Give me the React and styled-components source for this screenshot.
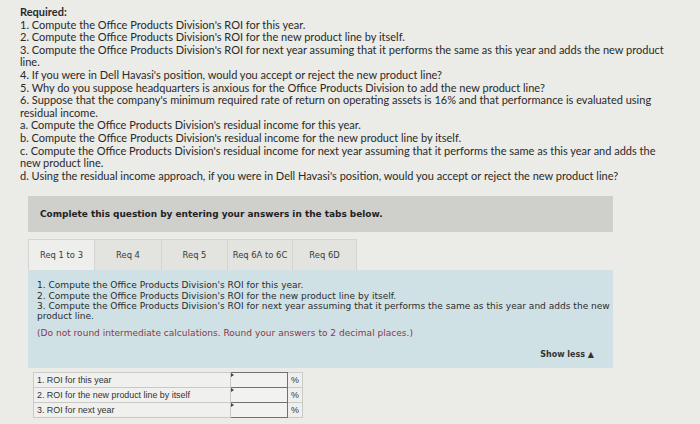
import React from "react";
import styled, { createGlobalStyle } from "styled-components";

const Global = createGlobalStyle`
  html, body { margin: 0; padding: 0; background: #ebebe7; }
  body { width: 700px; height: 424px; overflow: hidden; }
`;

const Page = styled.div`
  padding: 6px 0 0 20px;
  width: 680px;
`;

const Required = styled.div`
  font-family: "Lato", "Liberation Sans", sans-serif;
  font-size: 11px;
  line-height: 12.6px;
  color: #2a2a2a;
  width: 656px;
  p { margin: 0; }
  strong { font-weight: 700; }
`;

const Work = styled.div`
  margin: 14px 0 0 8px;
  width: 585px;
`;

const Banner = styled.div`
  background: #cfcfcc;
  height: 36px;
  display: flex;
  align-items: center;
  padding-left: 12px;
  font-family: "DejaVu Sans", Verdana, sans-serif;
  font-weight: 700;
  font-size: 8.95px;
  color: #222;
`;

const Tabs = styled.div`
  display: flex;
  margin-top: 7px;
  height: 31px;
`;

const Tab = styled.div`
  width: ${(p) => p.$w}px;
  box-sizing: border-box;
  display: flex;
  align-items: center;
  justify-content: center;
  font-family: "DejaVu Sans", Verdana, sans-serif;
  font-size: 8.4px;
  color: #3a3a3a;
  background: ${(p) => (p.$active ? "#eeeeec" : "#e3e3e0")};
  border: 1px solid #d4d4d0;
  border-bottom: none;
  border-left-width: ${(p) => (p.$first ? 1 : 0)}px;
`;

const Panel = styled.div`
  background: #d0e1e6;
  padding: 10px 1px 7px 9px;
  font-family: "DejaVu Sans", Verdana, sans-serif;
  font-size: 9.05px;
  line-height: 10.2px;
  color: #2b2b2b;
  p { margin: 0; }
`;

const Note = styled.p`
  && { margin-top: 7px; }
  color: #8a3848;
`;

const ShowLess = styled.div`
  text-align: right;
  margin-top: 12px;
  padding-right: 18px;
  font-weight: 700;
  font-size: 8px;
  color: #333;
`;

const Table = styled.table`
  margin: 4px 0 0 5px;
  border-collapse: collapse;
  font-family: "Liberation Sans", Arial, sans-serif;
  font-size: 8.9px;
  color: #333;
  td { border: 1px solid #c9c9c6; height: 14px; padding: 0; }
`;

const Label = styled.td`
  width: 193px;
  && { padding-left: 3px; }
  background: #f0f0ee;
`;

const InputCell = styled.td`
  width: 56px;
  position: relative;
  && { border: 1.5px solid #6d7272; }
  background: #f2f2f0;
  &::before {
    content: "";
    position: absolute;
    left: 0;
    top: 0;
    border-left: 3px solid #444;
    border-top: 2px solid transparent;
    border-bottom: 2px solid transparent;
  }
`;

const Pct = styled.td`
  width: 14px;
  text-align: center;
  background: #efefed;
`;

const tabs = [
  { t: "Req 1 to 3", w: 67, active: true },
  { t: "Req 4", w: 67 },
  { t: "Req 5", w: 66 },
  { t: "Req 6A to 6C", w: 65 },
  { t: "Req 6D", w: 64 },
];

const rows = [
  "1. ROI for this year",
  "2. ROI for the new product line by itself",
  "3. ROI for next year",
];

export default function App() {
  return (
    <>
      <Global />
      <Page>
        <Required>
          <p><strong>Required:</strong></p>
          <p>1. Compute the Office Products Division's ROI for this year.</p>
          <p>2. Compute the Office Products Division's ROI for the new product line by itself.</p>
          <p>3. Compute the Office Products Division's ROI for next year assuming that it performs the same as this year and adds the new product line.</p>
          <p>4. If you were in Dell Havasi's position, would you accept or reject the new product line?</p>
          <p>5. Why do you suppose headquarters is anxious for the Office Products Division to add the new product line?</p>
          <p>6. Suppose that the company's minimum required rate of return on operating assets is 16% and that performance is evaluated using residual income.</p>
          <p>a. Compute the Office Products Division's residual income for this year.</p>
          <p>b. Compute the Office Products Division's residual income for the new product line by itself.</p>
          <p>c. Compute the Office Products Division's residual income for next year assuming that it performs the same as this year and adds the new product line.</p>
          <p>d. Using the residual income approach, if you were in Dell Havasi's position, would you accept or reject the new product line?</p>
        </Required>
        <Work>
          <Banner>Complete this question by entering your answers in the tabs below.</Banner>
          <Tabs>
            {tabs.map((x, i) => (
              <Tab key={x.t} $w={x.w} $active={x.active} $first={i === 0}>{x.t}</Tab>
            ))}
          </Tabs>
          <Panel>
            <p>1. Compute the Office Products Division's ROI for this year.</p>
            <p>2. Compute the Office Products Division's ROI for the new product line by itself.</p>
            <p>3. Compute the Office Products Division's ROI for next year assuming that it performs the same as this year and adds the new product line.</p>
            <Note>(Do not round intermediate calculations. Round your answers to 2 decimal places.)</Note>
            <ShowLess>Show less ▲</ShowLess>
          </Panel>
          <Table>
            <tbody>
              {rows.map((r) => (
                <tr key={r}>
                  <Label>{r}</Label>
                  <InputCell />
                  <Pct>%</Pct>
                </tr>
              ))}
            </tbody>
          </Table>
        </Work>
      </Page>
    </>
  );
}
